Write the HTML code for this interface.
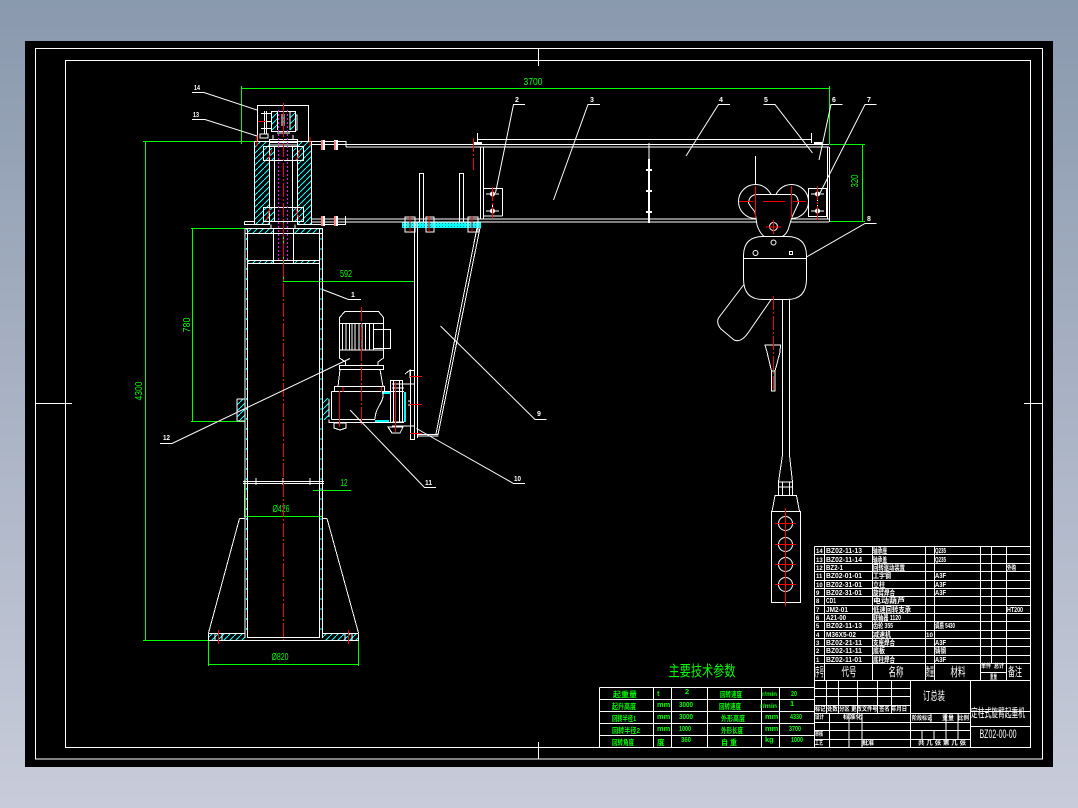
<!DOCTYPE html>
<html lang="zh"><head><meta charset="utf-8"><title>定柱式旋臂起重机</title>
<style>
html,body{margin:0;padding:0;width:1078px;height:808px;overflow:hidden;background:linear-gradient(#8a99ae,#c8ccda)}
svg{position:absolute;left:0;top:0}
text{font-family:"Liberation Sans","Noto Sans CJK SC",sans-serif}
.w{fill:none;stroke:#fff;stroke-width:1}
.t{stroke:#fff;stroke-width:2;fill:none}
.g{fill:none;stroke:#00ff00;stroke-width:1}
.r{fill:none;stroke:#ff0000;stroke-width:1}
.rd{fill:none;stroke:#ff0000;stroke-width:1;stroke-dasharray:14 2 2 2}
.m{fill:none;stroke:#ff00ff;stroke-width:1;stroke-dasharray:2 2}
.c{fill:none;stroke:#00ffff;stroke-width:1;stroke-dasharray:2 8}
.l{fill:#fff;font-size:7px;font-weight:bold}
.gt{fill:#00ff00;font-size:10px}
.s{fill:#fff;font-size:7px;font-weight:bold}
.h{fill:#fff;font-size:12px}
.gs{fill:#00ff00;font-size:7.5px;font-weight:bold}
</style></head><body>
<svg width="1078" height="808" viewBox="0 0 1078 808" shape-rendering="crispEdges">
<defs>
<pattern id="hat" width="6" height="6" patternUnits="userSpaceOnUse"><path d="M0 6L6 0" stroke="#00ffff" stroke-width="1" fill="none"/></pattern>
<pattern id="dots" width="3" height="3" patternUnits="userSpaceOnUse"><rect width="3" height="3" fill="#00ffff"/><rect x="1" y="1" width="1" height="1" fill="#007f7f"/></pattern>
</defs>
<rect x="25" y="41" width="1028" height="726" fill="#000"/>
<!-- frame -->
<rect class="w" x="35.5" y="48.5" width="1007" height="710.5"/>
<rect class="w" x="65.5" y="60.5" width="965" height="687"/>
<path class="w" d="M35.5 403.5H72M1024 403.5H1042.5M538.5 48V66M538.5 742V759"/>

<!-- hatched areas -->
<g fill="url(#hat)">
<rect x="254.5" y="141.5" width="15" height="83"/>
<rect x="297.5" y="141.5" width="14" height="83"/>
<rect x="264" y="148" width="10" height="12"/><rect x="293" y="148" width="10" height="12"/>
<rect x="264" y="208" width="10" height="13"/><rect x="293" y="208" width="10" height="13"/>
<rect x="247" y="228.5" width="26" height="5"/><rect x="293.5" y="228.5" width="26" height="5"/>
<rect x="247" y="260.5" width="26" height="3"/><rect x="293.5" y="260.5" width="26" height="3"/>
<rect x="271.5" y="112" width="6" height="18"/><rect x="290" y="112" width="5" height="18"/>
<rect x="208.5" y="633.5" width="36" height="7"/><rect x="322.5" y="633.5" width="36" height="7"/>
<rect x="237" y="399" width="8" height="22"/><rect x="322.5" y="398" width="7" height="22"/>
<rect x="402" y="222" width="79" height="6" fill="url(#dots)"/>
</g>
<rect x="382" y="391" width="8" height="3" fill="#0ff"/><rect x="375" y="420" width="14" height="3" fill="#0ff"/><rect x="404" y="392" width="2" height="30" fill="#0ff"/>

<!-- cyan dashes on column walls -->
<path class="c" d="M246.5 228V638M321 228V638"/>

<!-- green dims -->
<path class="g" d="M241.5 86V144M241.5 88.5H829.5M829.5 86V144.5M829.5 144.5H865M829.5 221.5H865M862.5 144.5V221.5"/>
<path class="g" d="M143 141.5H257M145.5 141.5V640.5M143 640.5H210M191 228.5H245M192.5 228.5V421.5M191 421.5H245"/>
<path class="g" d="M283.5 222V281.5H415M414.5 228V281.5"/>
<path class="g" d="M313 490.5H351M244.5 480V516.5H322.5V480M208.5 640V666M358.5 640V666M208.5 664.5H358.5"/>
<text class="gt" x="533" y="85" text-anchor="middle" textLength="19" lengthAdjust="spacingAndGlyphs">3700</text>
<text class="gt" transform="translate(142,391) rotate(-90)" text-anchor="middle" textLength="19" lengthAdjust="spacingAndGlyphs">4300</text>
<text class="gt" transform="translate(190,325) rotate(-90)" text-anchor="middle" textLength="15" lengthAdjust="spacingAndGlyphs">780</text>
<text class="gt" x="346" y="277" text-anchor="middle" textLength="12" lengthAdjust="spacingAndGlyphs">592</text>
<text class="gt" transform="translate(858,181) rotate(-90)" text-anchor="middle" textLength="13" lengthAdjust="spacingAndGlyphs">320</text>
<text class="gt" x="344" y="486" text-anchor="middle" textLength="7" lengthAdjust="spacingAndGlyphs">12</text>
<text class="gt" x="281" y="512" text-anchor="middle" textLength="17" lengthAdjust="spacingAndGlyphs">Ø426</text>
<text class="gt" x="280" y="660" text-anchor="middle" textLength="17" lengthAdjust="spacingAndGlyphs">Ø820</text>

<!-- top assembly -->
<g class="w">
<rect x="257.5" y="105.5" width="51" height="36"/>
<rect x="271.5" y="111.5" width="24" height="20"/>
<path d="M277.5 111.5V130M290 111.5V130M295 115H297V130H295M264.5 111V134M266.5 111V134M261 113.5H271M261 121.5H271M261 128.5H271M260 134H268V138H260ZM282 114V126M284 114V126M277 133H290"/>
<rect x="269.5" y="139.5" width="28" height="3"/><path d="M269.5 145H297.5M273 135V139M293 135V139"/>
<rect x="254.5" y="141.5" width="15" height="83"/>
<rect x="297.5" y="141.5" width="14" height="83"/>
<rect x="263.5" y="146.5" width="40" height="14"/>
<rect x="263.5" y="207.5" width="40" height="14"/>
<path d="M274.5 147V221M292.5 147V221M244.5 221.5H254M244.5 221.5V224.5H254M271 224.5V228M295 224.5V228"/>
<path d="M311.5 141.5H346V147M311.5 144.5H829M346 147H829"/>
<path d="M311.5 219H829M311.5 222H829M311.5 224.5H345.5V216"/>
<path d="M477.5 133V143M477.5 139.5H811.5M811.5 133V143"/>
</g>
<g fill="#fff"><rect x="321" y="140" width="4" height="10"/><rect x="334" y="140" width="4" height="10"/><rect x="321" y="216" width="4" height="10"/><rect x="334" y="216" width="4" height="10"/><rect x="474" y="142" width="8" height="2"/><rect x="814" y="142" width="8" height="2"/></g>

<!-- beam -->
<g class="w">
<path d="M480.5 147V219M483.5 147V219M827.5 147V219M829.5 147V222"/>
<path d="M483.5 188.5H502.5V216M483.5 216H502.5"/>
<rect x="808.5" y="188.5" width="18" height="28"/>
<path d="M649 143V159"/>
<path d="M419.5 222V173.5H423.5V222M459.5 222V173.5H463.5V222"/>
<path d="M405 217H415V232H405ZM426 217H434V232H426ZM468 217H478V232H468Z"/>
</g>
<path class="t" d="M649 159V223M646 170H652M646 191H652M646 212H652"/>
<g class="w">
<path d="M486 194H499M492.5 188V201M486 211H499M492.5 205V218M811 194H824M817.5 188V201M811 211H824M817.5 205V218"/>
</g>
<g fill="#fff"><circle cx="492.5" cy="194" r="2.5"/><circle cx="492.5" cy="211" r="2.5"/><circle cx="817.5" cy="194" r="2.5"/><circle cx="817.5" cy="211" r="2.5"/></g>

<!-- column -->
<g class="w">
<path d="M245 228V638M247.5 228V638M319.5 228V638M322.5 228V638M245 228.5H322.5M245 233.5H322.5M247 260.5H319M247 263.5H319M273.5 228V264M293.5 228V264"/>
<path d="M243 481.5H324M243 483.5H324M256 478V485M283 478V485M310 478V485"/>
<path d="M239.5 518.5H245M239.5 518.5L208.5 633M327 518.5H322.5M327 518.5L358.5 633M208.5 633.5H245M322.5 633.5H358.5M208.5 633.5V640.5H358.5V633.5M247 637.5H320M215 634V640M222 634V640M345 634V640M352 634V640"/>
<path d="M237 399H245M237 421H245M237 399V421"/>
</g>

<!-- motor and reducer -->
<g class="w">
<path d="M339.5 323.5V317.5L345 311.5H378.5L383.5 317.5V323.5M339.5 323.5H383.5V350H339.5ZM339.5 350V358L345.5 362V365M383.5 350V358L378 362V365"/>
<path d="M342.5 323.5V350M346 323.5V350M349.5 323.5V350M352 323.5V350M355 323.5V350M359 323.5V350M362 323.5V350M365.5 323.5V350M369.5 323.5V350M373.5 323.5V350"/>
<rect x="373.5" y="329.5" width="17" height="19"/>
<rect x="339.5" y="365.5" width="44" height="4"/>
<path d="M340 369.5L338 386.5M380 369.5L383 386.5"/>
<rect x="334.5" y="386.5" width="50" height="5"/>
<path d="M331.5 391.5H404M331.5 391.5V419.5M331.5 419.5H375M329 399V417M329 419.5V422.5H404M383 391.5C385 402 375 407 375 419"/>
<rect x="390.5" y="380.5" width="12" height="42"/>
<path d="M393.5 380.5V422M399.5 380.5V422M392 384H414M392 388H404M392 422H404M392 426H414"/>
<path d="M334 423H346V428L340 430L334 428ZM388 427H403L400 433H392Z"/>
<path d="M410.5 370.5H414.5V439.5H410.5ZM405 374L410 370V378M408 401H410M408 405H410"/>
</g>
<g class="w">
<path d="M414.5 222V440M417.5 222V438M417.5 434.5H438.5M417.5 436H438.5"/>
<path d="M480 228L438 434.5M477 228L436 434"/>
</g>

<!-- hoist -->
<g class="w">
<circle cx="755.5" cy="201.5" r="17" shape-rendering="auto"/>
<circle cx="791.5" cy="201.5" r="17" shape-rendering="auto"/>
</g>
<path d="M755.5 156V184" class="w"/>
<path d="M748.500 203Q749 195.500 756 194.500H794Q798 196 798.500 203L792 217L788 230Q785 236 781 237H765Q760 234 757 225L755 212L751 207Z" fill="#000" stroke="#fff" stroke-width="1" shape-rendering="auto"/>
<path d="M743.500 256Q743.500 236.500 763 236.500H787Q806.500 236.500 806.500 256V279Q806.500 299.500 787 299.500H763Q743.500 299.500 743.500 279Z" fill="#000" stroke="#fff" stroke-width="1" shape-rendering="auto"/>
<g class="w">
<path d="M743.500 258.500H806.500"/>
<circle cx="773.500" cy="242.500" r="2.500" shape-rendering="auto"/><circle cx="755.500" cy="253" r="2.500" shape-rendering="auto"/><circle cx="773.500" cy="226.500" r="4" shape-rendering="auto"/>
<rect x="789.500" y="251.500" width="3" height="3"/>
</g>
<path d="M743.500 285L718.500 318Q716 323 721 329L734 340Q741 343 748 333L771.500 299" fill="none" stroke="#fff" stroke-width="1" shape-rendering="auto"/>
<g class="w">
<path d="M782.500 299V455L778.500 482V495M789.500 299V455L792.500 482V495M778.500 482H792.500M778.500 487H792.500M782.500 482V495M789.500 482V495M775 495.500H796.500L799.500 511.500H772ZM765 345H780.500L780 352L775 371H771.500L767 352ZM771.500 371V391H775V371"/>
<rect x="771.500" y="511.500" width="29" height="91"/>
<g shape-rendering="auto"><circle cx="785.500" cy="523.500" r="7"/><circle cx="785.500" cy="544.500" r="7"/><circle cx="785.500" cy="564.500" r="7"/><circle cx="785.500" cy="584.500" r="7"/></g>
</g>

<!-- red centerlines -->
<path class="rd" d="M283.500 103V640"/>
<path class="rd" d="M473.500 138V170M492.500 187V218M817.500 186V222M773.500 296V390M361.500 307V427"/>
<path class="r" d="M257 135V146M310 137V146M272 150L268 160M300 150L297 160M270 208L267 220M296 208L299 220M258 121.500H266"/>
<path class="r" d="M322 140V150M335 141V150M322 216V226M335 216V226M410 216V232M429 216V232M472 216V232"/>
<path class="r" d="M755.500 186V218M791.500 186V218M739 201.500H753M763 201.500H785M793 201.500H806M773.500 220V234M766 227H781"/>
<path class="r" d="M785.500 508V606M775 523.500H796M775 544.500H796M775 564.500H796M775 584.500H796"/>
<path class="r" d="M339.500 391V427M395.500 382V432M343 387V392M381.500 387V392M410 376.500H422M410 404.500H422M410 433.500H422"/>
<path class="r" d="M218.500 630V644M348.500 630V644"/>
<path class="m" d="M278.500 110V262M287.500 110V262"/>

<!-- leaders -->
<g fill="none" stroke="#fff" stroke-width="1" shape-rendering="auto">
<path d="M192 92.500H204L257 110M192 119.500H205L257 136M525 104.500H513.500L495.500 193M600 104.500H588L553.500 200M730 104.500H718.500L686 156M763.500 104.500H775L812.500 153M842.500 104.500H831L819 160M876.500 104.500H865L820 193M876.500 223.500H865L806.500 257"/>
<path d="M361 299.500H348.500L322.500 289.500M160 443.500H172L350 358.500M546.500 419.500H535L440.500 326M525 483.500H513.500L416.500 428.500M436 487.500H424.500L350 410"/>
</g>
<g class="l" shape-rendering="auto">
<text x="194" y="90" textLength="6" lengthAdjust="spacingAndGlyphs">14</text><text x="193" y="117" textLength="6" lengthAdjust="spacingAndGlyphs">13</text>
<text x="515" y="102">2</text><text x="590" y="102">3</text><text x="719" y="102">4</text><text x="764" y="102">5</text><text x="832" y="102">6</text><text x="867" y="102">7</text><text x="867" y="221">8</text>
<text x="351" y="297">1</text><text x="537" y="416">9</text><text x="514" y="481" textLength="7" lengthAdjust="spacingAndGlyphs">10</text><text x="425" y="485" textLength="7" lengthAdjust="spacingAndGlyphs">11</text><text x="163" y="440" textLength="7" lengthAdjust="spacingAndGlyphs">12</text>
</g>

<!-- parameter table -->
<text x="702" y="676" text-anchor="middle" fill="#0f0" font-size="15" textLength="67" lengthAdjust="spacingAndGlyphs">主要技术参数</text>
<path class="w" d="M599.500 687.500H815M599.500 699.500H815M599.500 711.500H815M599.500 723.500H815M599.500 735.500H815M599.500 747.500H815M599.500 687.500V747.500M653.500 687.500V747.500M671.500 687.500V747.500M707.500 687.500V747.500M761.500 687.500V747.500M779.500 687.500V747.500"/>
<g class="gs" shape-rendering="auto">
<text x="613" y="697" textLength="24" lengthAdjust="spacingAndGlyphs">起重量</text><text x="657" y="696">t</text><text x="685" y="694">2</text><text x="720" y="697" textLength="22" lengthAdjust="spacingAndGlyphs">回转速度</text><text x="762" y="696" font-size="6" textLength="15" lengthAdjust="spacingAndGlyphs">r/min</text><text x="791" y="696" textLength="6" lengthAdjust="spacingAndGlyphs">20</text>
<text x="612" y="709" textLength="24" lengthAdjust="spacingAndGlyphs">起升高度</text><text x="657" y="707">mm</text><text x="679" y="707" textLength="14" lengthAdjust="spacingAndGlyphs">3000</text><text x="719" y="709" textLength="22" lengthAdjust="spacingAndGlyphs">回转速度</text><text x="760" y="708" font-size="6" textLength="17" lengthAdjust="spacingAndGlyphs">r/min</text><text x="790" y="706">1</text>
<text x="612" y="721" textLength="24" lengthAdjust="spacingAndGlyphs">回转半径1</text><text x="657" y="719">mm</text><text x="679" y="719" textLength="14" lengthAdjust="spacingAndGlyphs">3000</text><text x="721" y="721" textLength="24" lengthAdjust="spacingAndGlyphs">外形高度</text><text x="765" y="719">mm</text><text x="790" y="719" textLength="12" lengthAdjust="spacingAndGlyphs">4330</text>
<text x="612" y="733" textLength="28" lengthAdjust="spacingAndGlyphs">回转半径2</text><text x="657" y="731">mm</text><text x="679" y="731" textLength="12" lengthAdjust="spacingAndGlyphs">1000</text><text x="721" y="733" textLength="22" lengthAdjust="spacingAndGlyphs">外形长度</text><text x="765" y="731">mm</text><text x="789" y="731" textLength="12" lengthAdjust="spacingAndGlyphs">3700</text>
<text x="612" y="745" textLength="22" lengthAdjust="spacingAndGlyphs">回转角度</text><text x="657" y="745">度</text><text x="681" y="742" textLength="10" lengthAdjust="spacingAndGlyphs">360</text><text x="721" y="745" textLength="16" lengthAdjust="spacingAndGlyphs">自 重</text><text x="765" y="742">kg</text><text x="791" y="742" textLength="12" lengthAdjust="spacingAndGlyphs">1000</text>
</g>

<!-- right table -->
<path class="w" d="M814.500 546.500H1030M814.500 554.500H1030M814.500 563.500H1030M814.500 571.500H1030M814.500 580.500H1030M814.500 588.500H1030M814.500 596.500H1030M814.500 605.500H1030M814.500 613.500H1030M814.500 621.500H1030M814.500 630.500H1030M814.500 638.500H1030M814.500 646.500H1030M814.500 655.500H1030M814.500 663.500H1030M814.500 680.500H1030"/>
<path class="w" d="M814.500 546.500V747.500M824.500 546.500V680M872.500 546.500V680M925.500 546.500V680M934.500 546.500V680M980.500 546.500V680M991.500 546.500V663M1006.500 546.500V680M980.500 672.500H1006"/>
<path class="w" d="M814.500 688.500H910.500M814.500 696.500H910.500M814.500 705.500H910.500M814.500 713.500H910.500M814.500 722.500H910.500M814.500 730.500H910.500M814.500 739.500H910.500M826.500 680V713M838.500 680V713M857.500 680V713M877.500 680V713M891.500 680V713M910.500 680V747.500M829.500 713V747M849 713V747M862 713V747"/>
<path class="w" d="M910.500 713.500H970.500M910.500 722.500H970.500M910.500 730.500H970.500M910.500 739.500H970.500M970.500 680V747.500M970.500 711.500H1030M970.500 726.500H1030M922 730V739M934 730V739M946 713V739M958 713V739M931 713V722"/>
<g class="s" shape-rendering="auto">
<text x="816" y="553" font-size="6">14</text><text x="826" y="553" textLength="36" lengthAdjust="spacingAndGlyphs">BZ02-11-13</text><text x="873" y="553" textLength="14" lengthAdjust="spacingAndGlyphs">轴承座</text><text x="935" y="553" textLength="11" lengthAdjust="spacingAndGlyphs">Q235</text>
<text x="816" y="562" font-size="6">13</text><text x="826" y="562" textLength="36" lengthAdjust="spacingAndGlyphs">BZ02-11-14</text><text x="873" y="562" textLength="14" lengthAdjust="spacingAndGlyphs">轴承盖</text><text x="935" y="562" textLength="11" lengthAdjust="spacingAndGlyphs">Q235</text>
<text x="816" y="570" font-size="6">12</text><text x="826" y="570" textLength="17" lengthAdjust="spacingAndGlyphs">BZ2-1</text><text x="873" y="570" textLength="32" lengthAdjust="spacingAndGlyphs">回转驱动装置</text><text x="1007" y="570" textLength="9" lengthAdjust="spacingAndGlyphs">外购</text>
<text x="816" y="578" font-size="6">11</text><text x="826" y="578" textLength="36" lengthAdjust="spacingAndGlyphs">BZ02-01-01</text><text x="873" y="578" textLength="18" lengthAdjust="spacingAndGlyphs">工字钢</text><text x="935" y="578" textLength="11" lengthAdjust="spacingAndGlyphs">A3F</text>
<text x="816" y="587" font-size="6">10</text><text x="826" y="587" textLength="36" lengthAdjust="spacingAndGlyphs">BZ02-31-01</text><text x="873" y="587" textLength="12" lengthAdjust="spacingAndGlyphs">立柱</text><text x="935" y="587" textLength="11" lengthAdjust="spacingAndGlyphs">A3F</text>
<text x="816" y="595" font-size="6">9</text><text x="826" y="595" textLength="36" lengthAdjust="spacingAndGlyphs">BZ02-31-01</text><text x="873" y="595" textLength="22" lengthAdjust="spacingAndGlyphs">旋臂焊合</text><text x="935" y="595" textLength="11" lengthAdjust="spacingAndGlyphs">A3F</text>
<text x="816" y="603" font-size="6">8</text><text x="826" y="603" textLength="10" lengthAdjust="spacingAndGlyphs">CD1</text><text x="873" y="603" textLength="32" lengthAdjust="spacingAndGlyphs">电动葫芦</text>
<text x="816" y="612" font-size="6">7</text><text x="826" y="612" textLength="22" lengthAdjust="spacingAndGlyphs">JM2-01</text><text x="873" y="612" textLength="38" lengthAdjust="spacingAndGlyphs">低速回转支承</text><text x="1007" y="612" textLength="16" lengthAdjust="spacingAndGlyphs">HT200</text>
<text x="816" y="620" font-size="6">6</text><text x="826" y="620" textLength="20" lengthAdjust="spacingAndGlyphs">A21-00</text><text x="873" y="620" textLength="28" lengthAdjust="spacingAndGlyphs">联轴器 1120</text>
<text x="816" y="628" font-size="6">5</text><text x="826" y="628" textLength="36" lengthAdjust="spacingAndGlyphs">BZ02-11-13</text><text x="873" y="628" textLength="20" lengthAdjust="spacingAndGlyphs">齿轮 355</text><text x="935" y="628" textLength="20" lengthAdjust="spacingAndGlyphs">调质 5430</text>
<text x="816" y="637" font-size="6">4</text><text x="826" y="637" textLength="30" lengthAdjust="spacingAndGlyphs">M36X5-02</text><text x="873" y="637" textLength="18" lengthAdjust="spacingAndGlyphs">减速机</text><text x="926" y="637" font-size="6" textLength="7" lengthAdjust="spacingAndGlyphs">10</text>
<text x="816" y="645" font-size="6">3</text><text x="826" y="645" textLength="36" lengthAdjust="spacingAndGlyphs">BZ02-21-11</text><text x="873" y="645" textLength="22" lengthAdjust="spacingAndGlyphs">支座焊合</text><text x="935" y="645" textLength="11" lengthAdjust="spacingAndGlyphs">A3F</text>
<text x="816" y="653" font-size="6">2</text><text x="826" y="653" textLength="36" lengthAdjust="spacingAndGlyphs">BZ02-11-11</text><text x="873" y="653" textLength="12" lengthAdjust="spacingAndGlyphs">底板</text><text x="935" y="653" textLength="11" lengthAdjust="spacingAndGlyphs">铸钢</text>
<text x="816" y="662" font-size="6">1</text><text x="826" y="662" textLength="36" lengthAdjust="spacingAndGlyphs">BZ02-11-01</text><text x="873" y="662" textLength="22" lengthAdjust="spacingAndGlyphs">底柱焊合</text><text x="935" y="662" textLength="11" lengthAdjust="spacingAndGlyphs">A3F</text>
</g>
<g class="h" shape-rendering="auto">
<text x="815" y="676" textLength="9" lengthAdjust="spacingAndGlyphs">序号</text><text x="849" y="676" text-anchor="middle" textLength="15" lengthAdjust="spacingAndGlyphs">代号</text><text x="896" y="676" text-anchor="middle" textLength="15" lengthAdjust="spacingAndGlyphs">名称</text><text x="926" y="676" textLength="8" lengthAdjust="spacingAndGlyphs">数量</text><text x="958" y="676" text-anchor="middle" textLength="15" lengthAdjust="spacingAndGlyphs">材料</text><text x="1015" y="676" text-anchor="middle" textLength="14" lengthAdjust="spacingAndGlyphs">备注</text>
<text x="934" y="700" text-anchor="middle" textLength="22" lengthAdjust="spacingAndGlyphs">订总装</text><text x="971" y="717" textLength="54" lengthAdjust="spacingAndGlyphs">定柱式旋臂起重机</text><text x="998" y="738" text-anchor="middle" textLength="37" lengthAdjust="spacingAndGlyphs">BZ02-00-00</text>
</g>
<g class="s" font-size="6" shape-rendering="auto">
<text x="981" y="668" font-size="6" textLength="10" lengthAdjust="spacingAndGlyphs">单件</text><text x="994" y="668" font-size="6" textLength="10" lengthAdjust="spacingAndGlyphs">总计</text><text x="990" y="679" font-size="6" textLength="7" lengthAdjust="spacingAndGlyphs">重量</text>
<text x="815" y="711" font-size="6" textLength="92" lengthAdjust="spacingAndGlyphs">标记 处数 分区 更改文件号 签名 年月日</text>
<text x="815" y="719" font-size="6" textLength="9" lengthAdjust="spacingAndGlyphs">设计</text><text x="843" y="719" font-size="6" textLength="19" lengthAdjust="spacingAndGlyphs">标准化</text>
<text x="815" y="736" font-size="6" textLength="8" lengthAdjust="spacingAndGlyphs">审核</text><text x="815" y="745" font-size="6" textLength="8" lengthAdjust="spacingAndGlyphs">工艺</text><text x="862" y="745" font-size="6" textLength="12" lengthAdjust="spacingAndGlyphs">批准</text>
<text x="912" y="720" font-size="6" textLength="20" lengthAdjust="spacingAndGlyphs">阶段标记</text><text x="942" y="720" font-size="6" textLength="12" lengthAdjust="spacingAndGlyphs">重量</text><text x="958" y="720" font-size="6" textLength="11" lengthAdjust="spacingAndGlyphs">比例</text>
<text x="918" y="745" font-size="6" textLength="48" lengthAdjust="spacingAndGlyphs">共 几 张 第 几 张</text>
</g>
</svg>
</body></html>
